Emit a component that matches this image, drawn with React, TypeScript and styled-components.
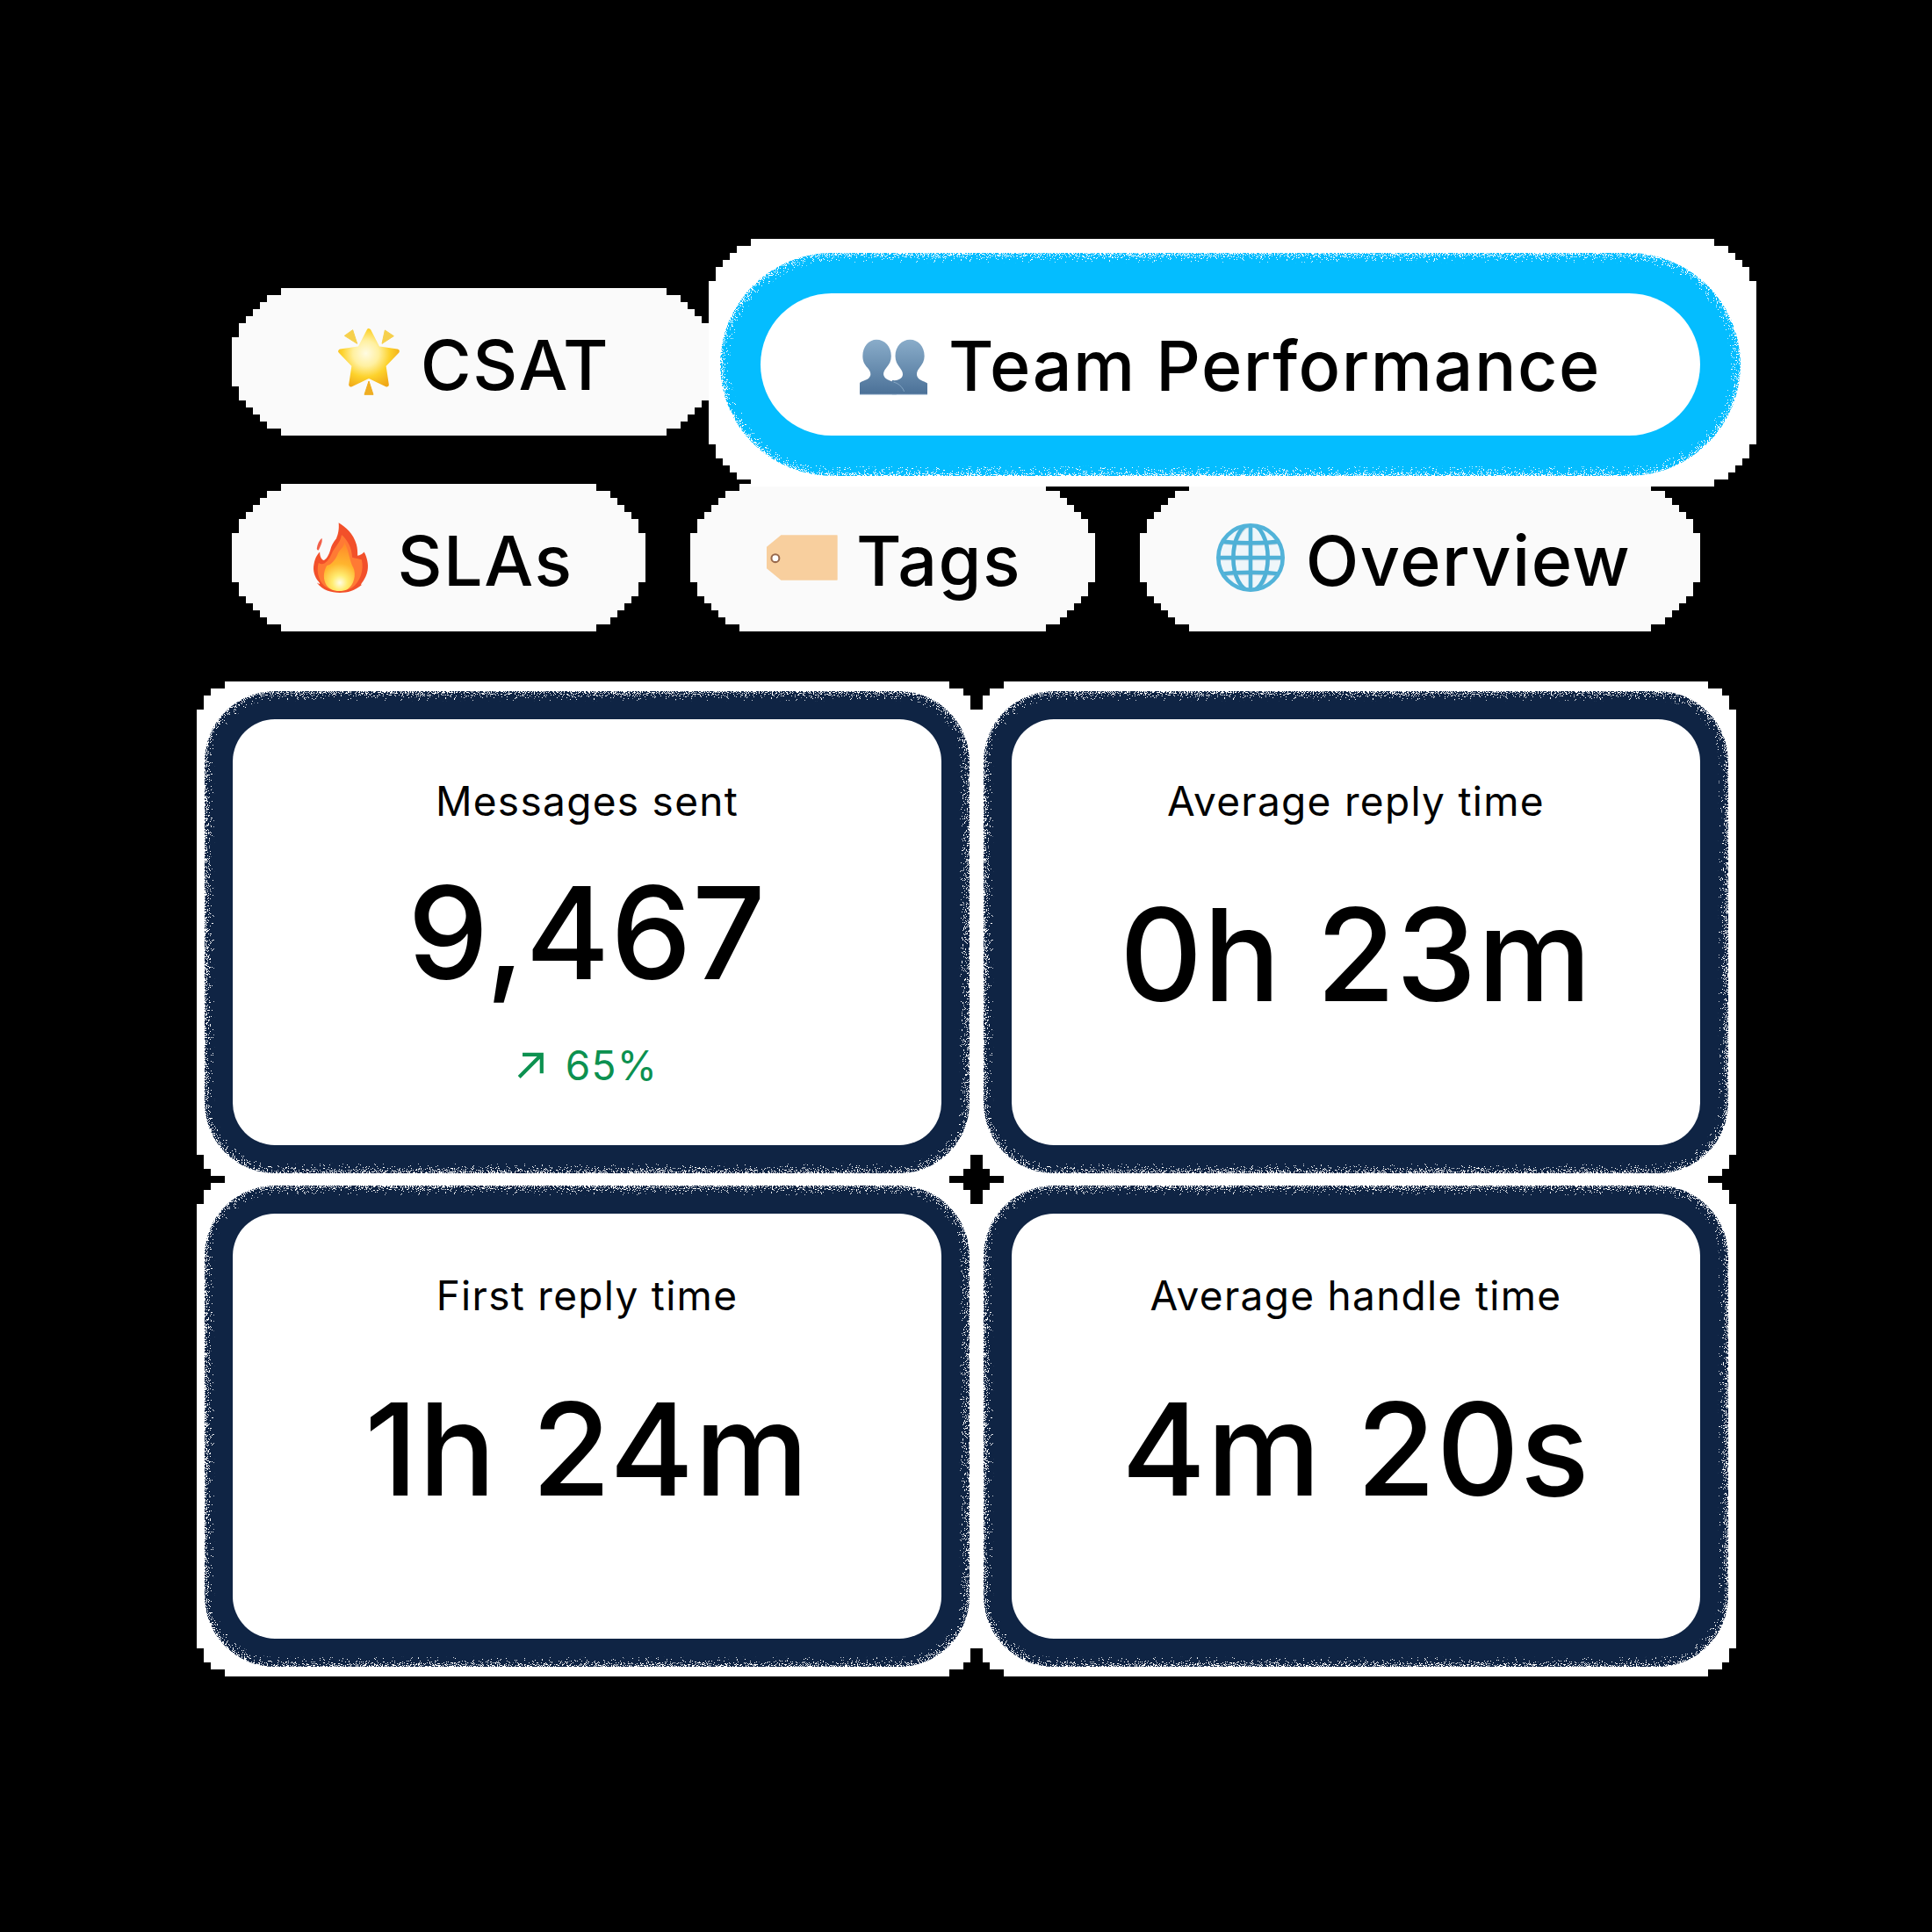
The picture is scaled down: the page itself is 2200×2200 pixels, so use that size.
import styled, {createGlobalStyle} from "styled-components";

const GlobalStyle = createGlobalStyle`
  html, body {
    margin: 0;
    padding: 0;
    background: #000;
  }
  body {
    font-family: "Inter", "Liberation Sans", sans-serif;
    color: #000;
  }
`;

// hard stepped outline, the corners come out as 8px blocks
function stairs(radius: number, step = 8) {
    const count = Math.ceil(radius / step);
    const insets: number[] = [];
    for (let k = 0; k < count; k++) {
        const mid = radius - (k + 0.5) * step;
        const raw = radius - Math.sqrt(radius * radius - mid * mid);
        insets.push(Math.round(raw / step) * step);
    }
    const right = (x: number) => `calc(100% - ${x}px)`;
    const points: string[] = [];
    for (let k = count - 1; k >= 0; k--) {
        points.push(`${insets[k]}px ${(k + 1) * step}px`, `${insets[k]}px ${k * step}px`);
    }
    for (let k = 0; k < count; k++) {
        points.push(`${right(insets[k])} ${k * step}px`, `${right(insets[k])} ${(k + 1) * step}px`);
    }
    for (let k = count - 1; k >= 0; k--) {
        points.push(`${right(insets[k])} ${right((k + 1) * step)}`, `${right(insets[k])} ${right(k * step)}`);
    }
    for (let k = 0; k < count; k++) {
        points.push(`${insets[k]}px ${right(k * step)}`, `${insets[k]}px ${right((k + 1) * step)}`);
    }
    return `polygon(${points.join(",")})`;
}

const Page = styled.div`
  width: 2200px;
  height: 2200px;
  background: #000;
  padding: 328px 264px 0;
  box-sizing: border-box;
  isolation: isolate;
  overflow: hidden;
`;

const FilterDefs = styled.svg`
  display: block;
  width: 0;
  height: 0;
`;

const Tabs = styled.div`
  display: flex;
  flex-direction: column;
  gap: 55px;
  width: 1672px;
`;

const TabRow = styled.div`
  display: flex;
  align-items: flex-end;
  justify-content: space-between;
`;

const Tab = styled.div<{ $width: number; $gap?: number; $shift?: number }>`
  display: flex;
  align-items: center;
  justify-content: center;
  gap: ${p => p.$gap ?? 24}px;
  box-sizing: border-box;
  width: ${p => p.$width}px;
  height: 168px;
  padding-left: ${p => p.$shift ?? 0}px;
  background: #fafafa;
  clip-path: ${stairs(84)};
  font-size: 79px;
  font-weight: 500;
  letter-spacing: 1.5px;
`;

const ActiveGlow = styled.div`
  position: relative;
  z-index: 1;

  &::before {
    content: "";
    position: absolute;
    inset: -62px -64px -58px -59px;
    z-index: -2;
    background: #fff;
    clip-path: ${stairs(72)};
  }

  &::after {
    content: "";
    position: absolute;
    inset: -46px;
    z-index: -1;
    background: #04bdff;
    border-radius: 127px;
    filter: url(#dissolve-wide);
  }
`;

const ActiveTab = styled.div`
  display: flex;
  align-items: center;
  justify-content: center;
  gap: 24px;
  width: 1070px;
  height: 162px;
  background: #fff;
  border-radius: 81px;
  font-size: 79px;
  font-weight: 500;
  letter-spacing: 1.5px;
`;

const TabLabel = styled.span`
  line-height: 1;
  position: relative;
  top: 3px;
`;

const ActiveLabel = styled(TabLabel)`
  top: 1px;
`;

const Cards = styled.div`
  display: grid;
  grid-template-columns: 807px 784px;
  grid-template-rows: 485px 484px;
  justify-content: space-between;
  row-gap: 78px;
  margin: 100px 0 0 1px;
  width: 1671px;
`;

const Card = styled.div`
  position: relative;
  display: flex;
  flex-direction: column;
  align-items: center;
  box-sizing: border-box;
  padding-top: 62px;
  background: #fff;
  border-radius: 48px;

  &::before {
    content: "";
    position: absolute;
    inset: -43px -41px;
    z-index: -2;
    background: #fff;
    clip-path: ${stairs(48)};
  }

  &::after {
    content: "";
    position: absolute;
    inset: -32px;
    z-index: -1;
    background: #0f2444;
    border-radius: 80px;
    filter: url(#dissolve-narrow);
  }
`;

const CardTitle = styled.div`
  font-size: 46px;
  line-height: 62px;
  letter-spacing: 1.3px;
`;

const Value = styled.div<{ $raised?: boolean }>`
  margin-top: ${p => (p.$raised ? 44 : 69)}px;
  font-size: 146px;
  font-weight: 450;
  line-height: 150px;
  letter-spacing: 1px;
`;

const Delta = styled.div`
  display: flex;
  align-items: center;
  gap: 24px;
  margin-top: 48px;
  color: #0c9150;
  font-size: 46px;
  line-height: 56px;
  letter-spacing: 1.3px;
`;

const BustsIcon = styled.svg`
  margin-top: 5px;
`;

function Dissolve({id, blur}: { id: string; blur: number }) {
    return (
        <filter id={id} x="-10%" y="-20%" width="120%" height="140%" colorInterpolationFilters="sRGB">
            <feGaussianBlur in="SourceGraphic" stdDeviation={blur} result="soft"/>
            <feTurbulence type="fractalNoise" baseFrequency="1.1" numOctaves={2} seed={4} result="grain"/>
            <feColorMatrix in="grain" type="matrix"
                           values="0 0 0 0 0  0 0 0 0 0  0 0 0 0 0  2.4 0 0 0 -0.7" result="grainAlpha"/>
            <feComposite in="soft" in2="grainAlpha" operator="arithmetic" k1={0} k2={1} k3={1} k4={-0.97}
                         result="sum"/>
            <feComponentTransfer in="sum" result="hard">
                <feFuncA type="linear" slope={60} intercept={0}/>
            </feComponentTransfer>
            <feComposite in="SourceGraphic" in2="hard" operator="in"/>
        </filter>
    );
}

function StarEmoji() {
    return (
        <svg width={70} height={76} viewBox="40 40 210 228">
            <defs>
                <radialGradient id="star-fill" gradientUnits="userSpaceOnUse" cx="135" cy="125" r="125">
                    <stop offset="0" stopColor="#fffbe2"/>
                    <stop offset="0.35" stopColor="#fff0a0"/>
                    <stop offset="0.65" stopColor="#fdd22c"/>
                    <stop offset="1" stopColor="#f0a818"/>
                </radialGradient>
            </defs>
            <path d="M145 48 L176 108 L242 118 L196 166 L206 232 L145 203 L84 232 L94 166 L48 118 L114 108 Z"
                  fill="url(#star-fill)" stroke="url(#star-fill)" strokeWidth={15} strokeLinejoin="round"/>
            <path d="M62 65 L90 45 L105 92 Z" fill="#f6d04c" stroke="#f6d04c" strokeWidth={3} strokeLinejoin="round"/>
            <path d="M190 92 L200 46 L230 66 Z" fill="#f6d04c" stroke="#f6d04c" strokeWidth={3} strokeLinejoin="round"/>
            <path d="M145 220 L130 266 H160 Z" fill="#efae22" stroke="#efae22" strokeWidth={3} strokeLinejoin="round"/>
        </svg>
    );
}

function BustsEmoji() {
    const first = "M45 238 V200 C45 194 64 192 76 182 C86 172 82 160 72 148 C60 136 55 124 55 108 " +
        "C55 76 76 52 102 52 C130 52 152 76 152 108 C152 124 146 136 135 148 C125 160 122 172 132 182 " +
        "C142 190 150 192 170 198 V238 Z";
    const second = "M155 238 V190 C170 192 180 188 188 180 C194 172 192 160 182 148 C172 136 166 124 166 108 " +
        "C166 76 188 52 216 52 C244 52 265 76 265 108 C265 124 258 136 248 148 C238 160 236 172 244 182 " +
        "C252 192 268 194 275 200 V238 Z";
    return (
        <BustsIcon width={77} height={64} viewBox="45 50 230 190">
            <defs>
                <linearGradient id="bust-fill" gradientUnits="userSpaceOnUse" x1="0" y1="50" x2="0" y2="240">
                    <stop offset="0" stopColor="#8aadca"/>
                    <stop offset="1" stopColor="#4a7097"/>
                </linearGradient>
            </defs>
            <path d={first} fill="url(#bust-fill)"/>
            <path d={second} fill="url(#bust-fill)"/>
            <path d="M160 196 C176 200 190 212 196 228" fill="none" stroke="#9dbdd6" strokeWidth={2}/>
            <path d="M45 238 H275" stroke="#a9c3d9" strokeWidth={2}/>
        </BustsIcon>
    );
}

function FireEmoji() {
    return (
        <svg width={66} height={80} viewBox="40 24 186 238">
            <defs>
                <radialGradient id="fire-heart" gradientUnits="userSpaceOnUse" cx="130" cy="228" r="130">
                    <stop offset="0" stopColor="#fffde6"/>
                    <stop offset="0.2" stopColor="#ffec70"/>
                    <stop offset="0.5" stopColor="#ffb52e"/>
                    <stop offset="1" stopColor="#ff8a2a"/>
                </radialGradient>
            </defs>
            <path fill="#f2502a"
                  d="M126 25 C150 40 176 62 186 98 C190 112 190 124 190 136 C198 136 208 130 212 124 C222 142 228 166 224 186 C218 222 190 240 206 234 C180 256 156 262 130 262 C100 262 72 254 52 228 C62 234 66 234 58 224 C44 208 38 186 42 166 C46 146 52 134 62 124 C62 136 66 148 74 152 C84 150 92 136 98 116 C102 100 108 90 118 78 C124 64 128 48 126 25 Z"/>
            <path fill="#f2604a" d="M52 112 C54 98 60 84 69 77 C72 90 66 100 58 118 C54 118 52 116 52 112 Z"/>
            <path fill="#ff7a34"
                  d="M136 66 C156 84 170 108 172 142 C182 146 196 146 204 150 C212 184 200 226 170 246 C150 258 110 258 88 246 C62 232 48 194 58 160 C72 172 90 160 104 126 C114 106 132 92 136 66 Z"/>
            <path fill="url(#fire-heart)"
                  d="M146 92 C162 122 164 160 176 178 C186 200 178 236 156 250 C140 258 116 258 100 250 C76 238 68 200 86 170 C100 168 116 150 124 128 C130 116 142 110 146 92 Z"/>
        </svg>
    );
}

function TagEmoji() {
    return (
        <svg width={81} height={52} viewBox="42 54 237 152">
            <path d="M90 55 H276 C278 55 278 57 278 58 V203 C278 204 278 205 276 205 H90 L42 166 V94 Z" fill="#f8cf9e"/>
            <circle cx="71" cy="132" r="13" fill="#fff" stroke="#99694c" strokeWidth={6}/>
        </svg>
    );
}

function GlobeEmoji() {
    return (
        <svg width={78} height={78} viewBox="30 26 238 238">
            <defs>
                <clipPath id="globe-clip">
                    <circle cx="149" cy="145" r="112"/>
                </clipPath>
            </defs>
            <circle cx="149" cy="145" r="112" fill="#eef6fa"/>
            <g clipPath="url(#globe-clip)" fill="none" stroke="#c4d8e4" strokeWidth={8} transform="translate(3 6)">
                <ellipse cx="149" cy="145" rx="60" ry="115"/>
                <path d="M36 145 H262"/>
                <path d="M46 88 C90 96 208 96 252 88"/>
                <path d="M46 202 C90 194 208 194 252 202"/>
            </g>
            <g clipPath="url(#globe-clip)" fill="none" stroke="#4fb0d6" strokeWidth={14}>
                <ellipse cx="149" cy="145" rx="60" ry="115"/>
                <path d="M149 28 V262"/>
                <path d="M36 145 H262"/>
                <path d="M46 88 C90 96 208 96 252 88"/>
                <path d="M46 202 C90 194 208 194 252 202"/>
            </g>
            <circle cx="149" cy="145" r="112" fill="none" stroke="#52b3d9" strokeWidth={14}/>
        </svg>
    );
}

function TrendArrow() {
    return (
        <svg width={32} height={32} viewBox="62 78 100 100">
            <path d="M72 170 L152 90 M84 90 H152 V157" fill="none" stroke="#0c9150" strokeWidth={13}/>
        </svg>
    );
}

export default function App() {
    return (
        <Page>
            <GlobalStyle/>
            <FilterDefs aria-hidden="true">
                <Dissolve id="dissolve-wide" blur={6}/>
                <Dissolve id="dissolve-narrow" blur={6}/>
            </FilterDefs>
            <Tabs>
                <TabRow>
                    <Tab $width={551}><StarEmoji/><TabLabel>CSAT</TabLabel></Tab>
                    <ActiveGlow>
                        <ActiveTab><BustsEmoji/><ActiveLabel>Team Performance</ActiveLabel></ActiveTab>
                    </ActiveGlow>
                </TabRow>
                <TabRow>
                    <Tab $width={471} $gap={32} $shift={8}><FireEmoji/><TabLabel>SLAs</TabLabel></Tab>
                    <Tab $width={461} $gap={21} $shift={3}><TagEmoji/><TabLabel>Tags</TabLabel></Tab>
                    <Tab $width={638} $shift={8}><GlobeEmoji/><TabLabel>Overview</TabLabel></Tab>
                </TabRow>
            </Tabs>
            <Cards>
                <Card>
                    <CardTitle>Messages sent</CardTitle>
                    <Value $raised>9,467</Value>
                    <Delta><TrendArrow/>65%</Delta>
                </Card>
                <Card>
                    <CardTitle>Average reply time</CardTitle>
                    <Value>0h 23m</Value>
                </Card>
                <Card>
                    <CardTitle>First reply time</CardTitle>
                    <Value>1h 24m</Value>
                </Card>
                <Card>
                    <CardTitle>Average handle time</CardTitle>
                    <Value>4m 20s</Value>
                </Card>
            </Cards>
        </Page>
    );
}
